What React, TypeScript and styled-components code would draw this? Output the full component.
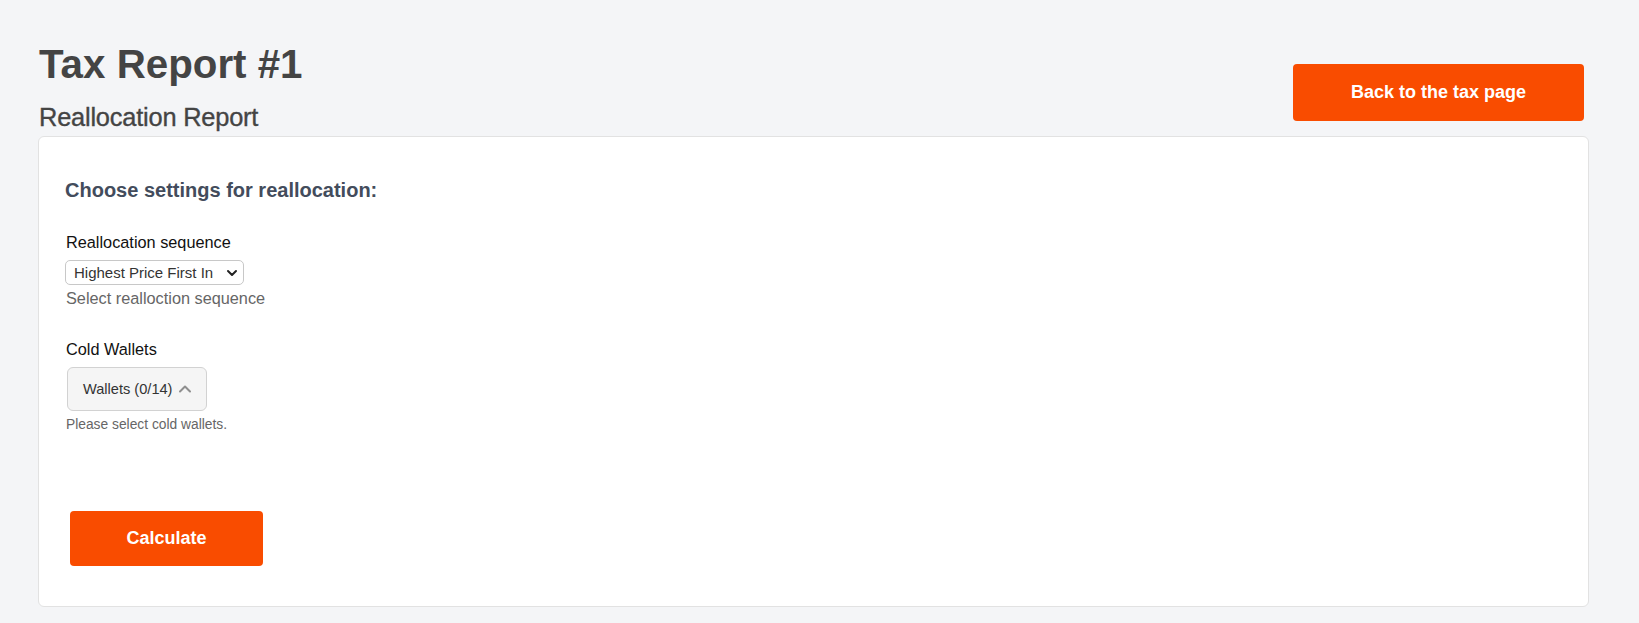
import React from 'react';
import styled, { createGlobalStyle } from 'styled-components';
import { ChevronDown, ChevronUp } from 'lucide-react';

const GlobalStyle = createGlobalStyle`
  html, body {
    margin: 0;
    padding: 0;
    background: #f4f5f7;
    font-family: "Liberation Sans", Arial, sans-serif;
  }
`;

const Page = styled.main`
  display: flex;
  flex-direction: column;
  padding: 41px 50px 16px 38px;
`;

const Header = styled.header`
  display: flex;
  justify-content: space-between;
  align-items: flex-start;
`;

const TitleBlock = styled.div`
  display: flex;
  flex-direction: column;
  gap: 13px;
  padding-left: 1px;
`;

const Title = styled.h1`
  margin: 0;
  font-size: 40.3px;
  line-height: 48px;
  font-weight: 700;
  color: #444444;
`;

const Subtitle = styled.h2`
  margin: 0;
  font-size: 25.4px;
  line-height: 30px;
  font-weight: 400;
  color: #444444;
  letter-spacing: -0.2px;
  -webkit-text-stroke: 0.35px #444444;
`;

const PrimaryButton = styled.button<{ $width: number; $height: number }>`
  display: flex;
  align-items: center;
  justify-content: center;
  width: ${({ $width }) => $width}px;
  height: ${({ $height }) => $height}px;
  border: none;
  border-radius: 4px;
  background: #f94c00;
  color: #ffffff;
  font-family: "Liberation Sans", Arial, sans-serif;
  font-size: 18px;
  font-weight: 700;
  cursor: pointer;
`;

const BackButton = styled(PrimaryButton)`
  margin-top: 23px;
  margin-right: 5px;
`;

const Card = styled.section`
  margin-top: 4px;
  display: flex;
  flex-direction: column;
  align-items: flex-start;
  background: #ffffff;
  border: 1px solid #e2e2e2;
  border-radius: 6px;
  padding: 41px 26px 40px 26px;
`;

const SectionTitle = styled.h3`
  margin: 0 0 30px 0;
  font-size: 20px;
  line-height: 24px;
  font-weight: 700;
  color: #434c5c;
`;

const Field = styled.div`
  display: flex;
  flex-direction: column;
  align-items: flex-start;
`;

const Label = styled.label`
  font-size: 16.3px;
  line-height: 20px;
  color: #111111;
  margin-bottom: 8px;
  padding-left: 1px;
`;

const SelectWrap = styled.div`
  position: relative;
  display: flex;
  align-items: center;

  svg {
    position: absolute;
    right: 4px;
    color: #222222;
    pointer-events: none;
  }
`;

const Select = styled.select`
  appearance: none;
  height: 25px;
  width: 179px;
  padding: 0 20px 0 8px;
  border: 1px solid #c8c8c8;
  border-radius: 5px;
  background: #ffffff;
  color: #333333;
  font-family: "Liberation Sans", Arial, sans-serif;
  font-size: 15px;
  outline: none;
`;

const Help = styled.div<{ $size: number; $top: number }>`
  margin-top: ${({ $top }) => $top}px;
  font-size: ${({ $size }) => $size}px;
  line-height: ${({ $size }) => ($size > 14 ? 20 : 16)}px;
  color: #666666;
  padding-left: 1px;
`;

const FieldSpacer = styled.div<{ $h: number }>`
  height: ${({ $h }) => $h}px;
`;

const WalletsToggle = styled.button`
  display: flex;
  align-items: center;
  gap: 3px;
  height: 44px;
  padding: 0 11px 0 15px;
  margin-left: 2px;
  border: 1px solid #d2d2d2;
  border-radius: 6px;
  background: #f5f5f5;
  color: #333333;
  font-family: "Liberation Sans", Arial, sans-serif;
  font-size: 14.6px;
  cursor: pointer;

  svg {
    color: #8f8f8f;
  }
`;

const CalcButton = styled(PrimaryButton)`
  margin-left: 5px;
`;

export default function App() {
  return (
    <>
      <GlobalStyle />
      <Page>
        <Header>
          <TitleBlock>
            <Title>Tax Report #1</Title>
            <Subtitle>Reallocation Report</Subtitle>
          </TitleBlock>
          <BackButton $width={291} $height={57}>
            Back to the tax page
          </BackButton>
        </Header>
        <Card>
          <SectionTitle>Choose settings for reallocation:</SectionTitle>
          <Field>
            <Label>Reallocation sequence</Label>
            <SelectWrap>
              <Select defaultValue="hpfi">
                <option value="hpfi">Highest Price First In</option>
                <option value="fifo">First In First Out</option>
                <option value="lifo">Last In First Out</option>
              </Select>
              <ChevronDown size={16} strokeWidth={3} />
            </SelectWrap>
            <Help $size={16.3} $top={3}>
              Select realloction sequence
            </Help>
          </Field>
          <FieldSpacer $h={31} />
          <Field>
            <Label>Cold Wallets</Label>
            <WalletsToggle>
              Wallets (0/14)
              <ChevronUp size={20} strokeWidth={2.4} />
            </WalletsToggle>
            <Help $size={13.8} $top={6}>
              Please select cold wallets.
            </Help>
          </Field>
          <FieldSpacer $h={78} />
          <CalcButton $width={193} $height={55}>
            Calculate
          </CalcButton>
        </Card>
      </Page>
    </>
  );
}
